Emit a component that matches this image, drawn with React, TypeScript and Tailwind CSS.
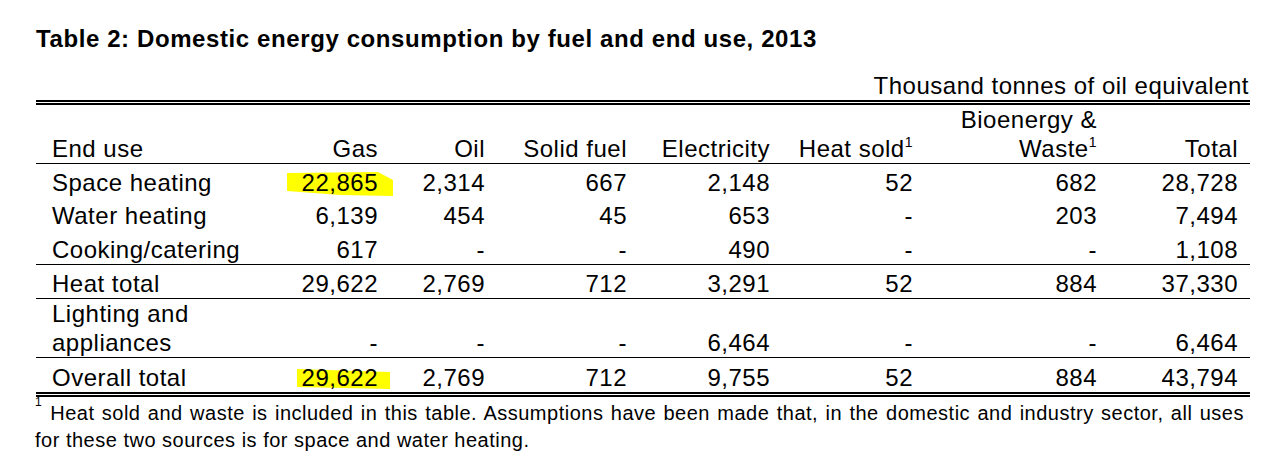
const font = { fontFamily: '"Liberation Sans", Arial, sans-serif' };

type Row = {
  label: React.ReactNode;
  values: string[];
  h: string;
  mark?: "first" | "last";
  border?: "single" | "double";
};

const rows: Row[] = [
  { label: "Space heating", values: ["22,865", "2,314", "667", "2,148", "52", "682", "28,728"], mark: "first", h: "h-[33px]" },
  { label: "Water heating", values: ["6,139", "454", "45", "653", "-", "203", "7,494"], h: "h-[33px]" },
  { label: "Cooking/catering", values: ["617", "-", "-", "490", "-", "-", "1,108"], border: "single", h: "h-[35px]" },
  { label: "Heat total", values: ["29,622", "2,769", "712", "3,291", "52", "884", "37,330"], border: "single", h: "h-[34px]" },
  {
    label: (
      <>
        Lighting and
        <br />
        appliances
      </>
    ),
    values: ["-", "-", "-", "6,464", "-", "-", "6,464"],
    border: "single",
    h: "h-[59px]",
  },
  { label: "Overall total", values: ["29,622", "2,769", "712", "9,755", "52", "884", "43,794"], mark: "last", border: "double", h: "h-[39px]" },
];

const Sup = () => <sup className="text-[14px] -top-[10px] leading-none">1</sup>;

function Highlight({ which }: { which: "first" | "last" }) {
  if (which === "first") {
    return (
      <svg className="absolute left-[30px] top-[8px]" width="106" height="24" viewBox="0 0 106 24">
        <polygon points="0,1 91,0 106,8 106,24 53,23 0,19" fill="#ffff00" />
      </svg>
    );
  }
  return (
    <svg className="absolute left-[40px] top-[10px]" width="93" height="21" viewBox="0 0 93 21">
      <polygon points="0,1 93,4 93,21 0,19" fill="#ffff00" />
    </svg>
  );
}

export default function App() {
  const cols = "grid grid-cols-[221px_133px_107px_142px_143px_143px_184px_141px]";
  return (
    <div className="w-[1280px] h-[472px] bg-white text-black pl-[36px] pt-[25px]" style={font}>
      <h1 className="text-[24px] leading-[28px] font-bold tracking-[0.6px] whitespace-nowrap">
        Table 2: Domestic energy consumption by fuel and end use, 2013
      </h1>

      <div className="w-[1214px] mt-[18px] text-[24px] leading-[29px] tracking-[0.5px]">
        <div className="text-right pr-[1px] whitespace-nowrap">Thousand tonnes of oil equivalent</div>

        {/* header */}
        <div className={`${cols} h-[64px] items-end border-t-[5px] border-double border-black border-b`}>
          <div className="pl-[16px]">End use</div>
          <div className="text-right pr-[12px]">Gas</div>
          <div className="text-right pr-[12px]">Oil</div>
          <div className="text-right pr-[12px]">Solid fuel</div>
          <div className="text-right pr-[12px]">Electricity</div>
          <div className="text-right pr-[12px] whitespace-nowrap">
            Heat sold
            <Sup />
          </div>
          <div className="text-right pr-[12px]">
            Bioenergy &amp;
            <br />
            Waste
            <Sup />
          </div>
          <div className="text-right pr-[12px]">Total</div>
        </div>

        {/* body */}
        {rows.map((r, i) => (
          <div
            key={i}
            className={`${cols} ${r.h} items-end ${
              r.border === "single" ? "border-b border-black" : r.border === "double" ? "border-b-[5px] border-double border-black" : ""
            }`}
          >
            <div className="pl-[16px] whitespace-nowrap">{r.label}</div>
            {r.values.map((v, j) => (
              <div key={j} className="relative h-full flex items-end justify-end pr-[12px]">
                {j === 0 && r.mark && <Highlight which={r.mark} />}
                <span className="relative">{v}</span>
              </div>
            ))}
          </div>
        ))}

        {/* footnote */}
        <div className="mt-[3px] -ml-[1px] text-[20px] leading-[27px] tracking-[0.5px]">
          <div className="whitespace-nowrap [word-spacing:1.3px]">
            <sup className="text-[12px] -top-[14px] leading-none">1</sup>
            <span className="ml-[8px]">
              Heat sold and waste is included in this table. Assumptions have been made that, in the domestic and industry sector, all uses
            </span>
          </div>
          <div className="whitespace-nowrap">for these two sources is for space and water heating.</div>
        </div>
      </div>
    </div>
  );
}
